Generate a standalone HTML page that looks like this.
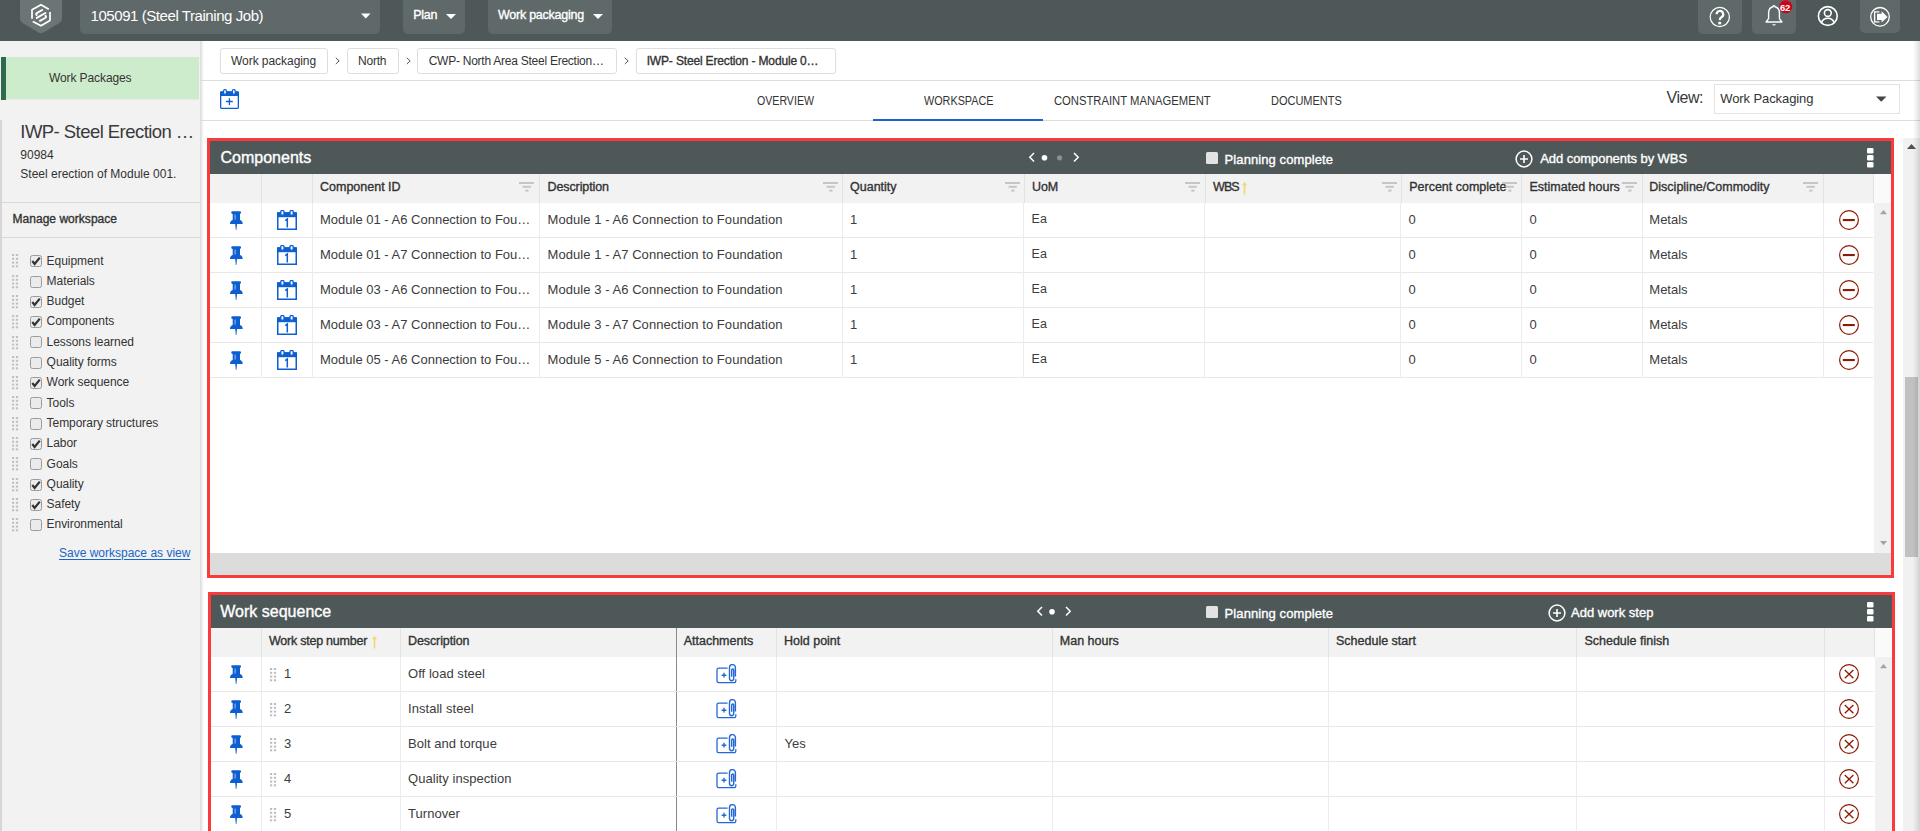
<!DOCTYPE html>
<html><head><meta charset="utf-8"><title>Workspace</title>
<style>
html,body{margin:0;padding:0;width:1920px;height:831px;overflow:hidden;background:#fff;}
body{position:relative;font-family:"Liberation Sans",sans-serif;}
.t{position:absolute;white-space:nowrap;line-height:1;}
.r{position:absolute;display:block;}
u{text-decoration:underline;text-underline-offset:2px;}
</style></head><body>
<div class="r" style="left:0px;top:0px;width:1920px;height:41px;background:#4e5859;"></div>
<svg class="r" style="left:20px;top:0px" width="42" height="35" viewBox="0 0 42 35"><path d="M0,0 H42 V18 Q42,21.5 39,23.2 L23.5,32.6 Q21,34 18.5,32.6 L3,23.2 Q0,21.5 0,18 Z" fill="#6c7576"/><g transform="translate(-2,0)" fill="none" stroke="#fff" stroke-width="1.7" stroke-linecap="butt" stroke-linejoin="round"><path d="M30.8,9.2 L23,4.8 L14,9.8 V18.8"/><path d="M14.8,21.4 L23,25.8 L32,20.6 V12"/></g><g transform="translate(-2,0)" fill="none" stroke="#fff" stroke-width="2" stroke-linecap="round"><path d="M24.2,10 L19.2,12.8 Q17.6,13.8 18.6,15"/><path d="M18.8,17.9 L27.4,13"/><path d="M27.6,15.8 Q28.6,17 27,18 L22,20.8"/></g></svg>
<div class="r" style="left:80px;top:0px;width:300px;height:34px;background:#5f6969;border-radius:0 0 5px 5px;"></div>
<div class="t" style="left:90.5px;top:8.30px;font-size:15px;color:#fff;letter-spacing:-0.43px;">105091 (Steel Training Job)</div>
<svg class="r" style="left:361px;top:13px" width="10" height="6" viewBox="0 0 10 6"><path d="M0,0.5 H9.5 L4.75,5.5 Z" fill="#fff"/></svg>
<div class="r" style="left:403px;top:0px;width:62px;height:34px;background:#5f6969;border-radius:0 0 5px 5px;"></div>
<div class="t" style="left:413.3px;top:9.42px;font-size:12.5px;-webkit-text-stroke:0.35px #fff;color:#fff;letter-spacing:-0.3px;">Plan</div>
<svg class="r" style="left:446px;top:14px" width="10" height="5" viewBox="0 0 10 5"><path d="M0,0 H10 L5,5 Z" fill="#fff"/></svg>
<div class="r" style="left:488px;top:0px;width:124px;height:34px;background:#5f6969;border-radius:0 0 5px 5px;"></div>
<div class="t" style="left:498px;top:9.42px;font-size:12.5px;-webkit-text-stroke:0.35px #fff;color:#fff;letter-spacing:-0.25px;">Work packaging</div>
<svg class="r" style="left:593px;top:14px" width="10" height="5" viewBox="0 0 10 5"><path d="M0,0 H10 L5,5 Z" fill="#fff"/></svg>
<div class="r" style="left:1698px;top:0px;width:44px;height:34px;background:#5f6969;border-radius:0 0 5px 5px;"></div>
<svg class="r" style="left:1708px;top:5px" width="24" height="24" viewBox="0 0 24 24"><circle cx="11.8" cy="12" r="9.6" fill="none" stroke="#fff" stroke-width="1.2"/><path d="M8.6,9.3 A3.3,3.3 0 1 1 13.4,12.2 C12.3,12.9 11.8,13.5 11.8,15" fill="none" stroke="#fff" stroke-width="2.2"/><circle cx="11.7" cy="18" r="1.6" fill="#fff"/></svg>
<div class="r" style="left:1752px;top:0px;width:44px;height:34px;background:#5f6969;border-radius:0 0 5px 5px;"></div>
<svg class="r" style="left:1762px;top:3px" width="24" height="24" viewBox="0 0 24 24"><path d="M12,2.6 C12.8,2.6 13,3.2 13,3.7 C16,4.4 17.4,6.8 17.4,10 V15.6 L19.9,19 H4.1 L6.6,15.6 V10 C6.6,6.8 8,4.4 11,3.7 C11,3.2 11.2,2.6 12,2.6 Z" fill="none" stroke="#fff" stroke-width="1.4" stroke-linejoin="round"/><path d="M10.3,21.2 H13.7 A1.7,1.4 0 0 1 10.3,21.2 Z" fill="#fff"/></svg>
<svg class="r" style="left:1779px;top:0px" width="14" height="14" viewBox="0 0 14 14"><circle cx="6.8" cy="6.8" r="6.5" fill="#d0021b"/></svg>
<div class="t" style="left:1780px;top:2.76px;font-size:9.5px;font-weight:700;color:#fff;letter-spacing:-0.4px;">62</div>
<svg class="r" style="left:1816px;top:4px" width="24" height="24" viewBox="0 0 24 24"><circle cx="11.8" cy="12" r="9.4" fill="none" stroke="#fff" stroke-width="1.6"/><circle cx="11.8" cy="9" r="3.4" fill="none" stroke="#fff" stroke-width="1.6"/><path d="M5.4,18.6 C6.6,15.4 9,14.2 11.8,14.2 C14.6,14.2 17,15.4 18.2,18.6" fill="none" stroke="#fff" stroke-width="1.6"/></svg>
<div class="r" style="left:1860px;top:0px;width:40px;height:33px;background:#5f6969;border-radius:0 0 5px 5px;"></div>
<svg class="r" style="left:1868px;top:5px" width="24" height="24" viewBox="0 0 24 24"><circle cx="12" cy="11.8" r="9.3" fill="none" stroke="#fff" stroke-width="1.3"/><path d="M11.4,6.9 H6.6 V16.9 H11.4" fill="none" stroke="#fff" stroke-width="1.4"/><path d="M9,8.8 H13.6 V6.3 L19.6,11.9 L13.6,17.5 V15 H9 Z" fill="#fff"/></svg>
<div class="r" style="left:0px;top:41px;width:200px;height:790px;background:#f2f2f2;"></div>
<div class="r" style="left:200px;top:41px;width:4px;height:790px;background:linear-gradient(to right,#dcdcdc,#eeeeee 40%,#ffffff);"></div>
<div class="r" style="left:1px;top:57px;width:198px;height:42px;background:#cdeccb;"></div>
<div class="r" style="left:1px;top:57px;width:5px;height:43px;background:#2e6b4c;"></div>
<div class="r" style="left:6px;top:99px;width:193px;height:1px;background:#e8e8e8;"></div>
<div class="t" style="left:49px;top:71.64px;font-size:12px;color:#333333;letter-spacing:-0.1px;">Work Packages</div>
<div class="r" style="left:0px;top:120px;width:2px;height:711px;background:#d6d6d6;"></div>
<div class="t" style="left:20.3px;top:122.54px;font-size:18.5px;color:#3a3a3a;letter-spacing:-0.55px;">IWP- Steel Erection …</div>
<div class="t" style="left:20.3px;top:148.64px;font-size:12px;color:#333333;">90984</div>
<div class="t" style="left:20.3px;top:167.84px;font-size:12px;color:#333333;">Steel erection of Module 001.</div>
<div class="r" style="left:2px;top:202px;width:198px;height:1px;background:#d8d8d8;"></div>
<div class="t" style="left:12.5px;top:212.84px;font-size:12px;-webkit-text-stroke:0.35px #333333;color:#333333;letter-spacing:0.03px;">Manage workspace</div>
<div class="r" style="left:2px;top:237px;width:198px;height:1px;background:#d8d8d8;"></div>
<svg class="r" style="left:12px;top:254.3px" width="7" height="14" viewBox="0 0 7 14"><rect x="0" y="0" width="2.2" height="2" fill="#c0c0c0"/><rect x="0" y="3.8" width="2.2" height="2" fill="#c0c0c0"/><rect x="0" y="7.6" width="2.2" height="2" fill="#c0c0c0"/><rect x="0" y="11.3" width="2.2" height="2" fill="#c0c0c0"/><rect x="3.9" y="0" width="2.2" height="2" fill="#c0c0c0"/><rect x="3.9" y="3.8" width="2.2" height="2" fill="#c0c0c0"/><rect x="3.9" y="7.6" width="2.2" height="2" fill="#c0c0c0"/><rect x="3.9" y="11.3" width="2.2" height="2" fill="#c0c0c0"/></svg>
<svg class="r" style="left:30px;top:255.2px" width="12" height="12" viewBox="0 0 12 12"><rect x="0.5" y="0.5" width="11" height="11" rx="2" fill="#ebebeb" stroke="#9a9a9a" stroke-width="1"/><path d="M2.3,6 L4.6,8.9 L9.8,2.6" fill="none" stroke="#333" stroke-width="2.2"/></svg>
<div class="t" style="left:46.6px;top:254.54px;font-size:12px;color:#333333;letter-spacing:-0.05px;">Equipment</div>
<svg class="r" style="left:12px;top:274.6px" width="7" height="14" viewBox="0 0 7 14"><rect x="0" y="0" width="2.2" height="2" fill="#c0c0c0"/><rect x="0" y="3.8" width="2.2" height="2" fill="#c0c0c0"/><rect x="0" y="7.6" width="2.2" height="2" fill="#c0c0c0"/><rect x="0" y="11.3" width="2.2" height="2" fill="#c0c0c0"/><rect x="3.9" y="0" width="2.2" height="2" fill="#c0c0c0"/><rect x="3.9" y="3.8" width="2.2" height="2" fill="#c0c0c0"/><rect x="3.9" y="7.6" width="2.2" height="2" fill="#c0c0c0"/><rect x="3.9" y="11.3" width="2.2" height="2" fill="#c0c0c0"/></svg>
<svg class="r" style="left:30px;top:275.5px" width="12" height="12" viewBox="0 0 12 12"><rect x="0.5" y="0.5" width="11" height="11" rx="2" fill="#ebebeb" stroke="#9a9a9a" stroke-width="1"/></svg>
<div class="t" style="left:46.6px;top:274.84px;font-size:12px;color:#333333;letter-spacing:-0.05px;">Materials</div>
<svg class="r" style="left:12px;top:294.9px" width="7" height="14" viewBox="0 0 7 14"><rect x="0" y="0" width="2.2" height="2" fill="#c0c0c0"/><rect x="0" y="3.8" width="2.2" height="2" fill="#c0c0c0"/><rect x="0" y="7.6" width="2.2" height="2" fill="#c0c0c0"/><rect x="0" y="11.3" width="2.2" height="2" fill="#c0c0c0"/><rect x="3.9" y="0" width="2.2" height="2" fill="#c0c0c0"/><rect x="3.9" y="3.8" width="2.2" height="2" fill="#c0c0c0"/><rect x="3.9" y="7.6" width="2.2" height="2" fill="#c0c0c0"/><rect x="3.9" y="11.3" width="2.2" height="2" fill="#c0c0c0"/></svg>
<svg class="r" style="left:30px;top:295.8px" width="12" height="12" viewBox="0 0 12 12"><rect x="0.5" y="0.5" width="11" height="11" rx="2" fill="#ebebeb" stroke="#9a9a9a" stroke-width="1"/><path d="M2.3,6 L4.6,8.9 L9.8,2.6" fill="none" stroke="#333" stroke-width="2.2"/></svg>
<div class="t" style="left:46.6px;top:295.14px;font-size:12px;color:#333333;letter-spacing:-0.05px;">Budget</div>
<svg class="r" style="left:12px;top:315.2px" width="7" height="14" viewBox="0 0 7 14"><rect x="0" y="0" width="2.2" height="2" fill="#c0c0c0"/><rect x="0" y="3.8" width="2.2" height="2" fill="#c0c0c0"/><rect x="0" y="7.6" width="2.2" height="2" fill="#c0c0c0"/><rect x="0" y="11.3" width="2.2" height="2" fill="#c0c0c0"/><rect x="3.9" y="0" width="2.2" height="2" fill="#c0c0c0"/><rect x="3.9" y="3.8" width="2.2" height="2" fill="#c0c0c0"/><rect x="3.9" y="7.6" width="2.2" height="2" fill="#c0c0c0"/><rect x="3.9" y="11.3" width="2.2" height="2" fill="#c0c0c0"/></svg>
<svg class="r" style="left:30px;top:316.1px" width="12" height="12" viewBox="0 0 12 12"><rect x="0.5" y="0.5" width="11" height="11" rx="2" fill="#ebebeb" stroke="#9a9a9a" stroke-width="1"/><path d="M2.3,6 L4.6,8.9 L9.8,2.6" fill="none" stroke="#333" stroke-width="2.2"/></svg>
<div class="t" style="left:46.6px;top:315.44px;font-size:12px;color:#333333;letter-spacing:-0.05px;">Components</div>
<svg class="r" style="left:12px;top:335.5px" width="7" height="14" viewBox="0 0 7 14"><rect x="0" y="0" width="2.2" height="2" fill="#c0c0c0"/><rect x="0" y="3.8" width="2.2" height="2" fill="#c0c0c0"/><rect x="0" y="7.6" width="2.2" height="2" fill="#c0c0c0"/><rect x="0" y="11.3" width="2.2" height="2" fill="#c0c0c0"/><rect x="3.9" y="0" width="2.2" height="2" fill="#c0c0c0"/><rect x="3.9" y="3.8" width="2.2" height="2" fill="#c0c0c0"/><rect x="3.9" y="7.6" width="2.2" height="2" fill="#c0c0c0"/><rect x="3.9" y="11.3" width="2.2" height="2" fill="#c0c0c0"/></svg>
<svg class="r" style="left:30px;top:336.4px" width="12" height="12" viewBox="0 0 12 12"><rect x="0.5" y="0.5" width="11" height="11" rx="2" fill="#ebebeb" stroke="#9a9a9a" stroke-width="1"/></svg>
<div class="t" style="left:46.6px;top:335.74px;font-size:12px;color:#333333;letter-spacing:-0.05px;">Lessons learned</div>
<svg class="r" style="left:12px;top:355.8px" width="7" height="14" viewBox="0 0 7 14"><rect x="0" y="0" width="2.2" height="2" fill="#c0c0c0"/><rect x="0" y="3.8" width="2.2" height="2" fill="#c0c0c0"/><rect x="0" y="7.6" width="2.2" height="2" fill="#c0c0c0"/><rect x="0" y="11.3" width="2.2" height="2" fill="#c0c0c0"/><rect x="3.9" y="0" width="2.2" height="2" fill="#c0c0c0"/><rect x="3.9" y="3.8" width="2.2" height="2" fill="#c0c0c0"/><rect x="3.9" y="7.6" width="2.2" height="2" fill="#c0c0c0"/><rect x="3.9" y="11.3" width="2.2" height="2" fill="#c0c0c0"/></svg>
<svg class="r" style="left:30px;top:356.7px" width="12" height="12" viewBox="0 0 12 12"><rect x="0.5" y="0.5" width="11" height="11" rx="2" fill="#ebebeb" stroke="#9a9a9a" stroke-width="1"/></svg>
<div class="t" style="left:46.6px;top:356.04px;font-size:12px;color:#333333;letter-spacing:-0.05px;">Quality forms</div>
<svg class="r" style="left:12px;top:376.1px" width="7" height="14" viewBox="0 0 7 14"><rect x="0" y="0" width="2.2" height="2" fill="#c0c0c0"/><rect x="0" y="3.8" width="2.2" height="2" fill="#c0c0c0"/><rect x="0" y="7.6" width="2.2" height="2" fill="#c0c0c0"/><rect x="0" y="11.3" width="2.2" height="2" fill="#c0c0c0"/><rect x="3.9" y="0" width="2.2" height="2" fill="#c0c0c0"/><rect x="3.9" y="3.8" width="2.2" height="2" fill="#c0c0c0"/><rect x="3.9" y="7.6" width="2.2" height="2" fill="#c0c0c0"/><rect x="3.9" y="11.3" width="2.2" height="2" fill="#c0c0c0"/></svg>
<svg class="r" style="left:30px;top:377.0px" width="12" height="12" viewBox="0 0 12 12"><rect x="0.5" y="0.5" width="11" height="11" rx="2" fill="#ebebeb" stroke="#9a9a9a" stroke-width="1"/><path d="M2.3,6 L4.6,8.9 L9.8,2.6" fill="none" stroke="#333" stroke-width="2.2"/></svg>
<div class="t" style="left:46.6px;top:376.34px;font-size:12px;color:#333333;letter-spacing:-0.05px;">Work sequence</div>
<svg class="r" style="left:12px;top:396.4px" width="7" height="14" viewBox="0 0 7 14"><rect x="0" y="0" width="2.2" height="2" fill="#c0c0c0"/><rect x="0" y="3.8" width="2.2" height="2" fill="#c0c0c0"/><rect x="0" y="7.6" width="2.2" height="2" fill="#c0c0c0"/><rect x="0" y="11.3" width="2.2" height="2" fill="#c0c0c0"/><rect x="3.9" y="0" width="2.2" height="2" fill="#c0c0c0"/><rect x="3.9" y="3.8" width="2.2" height="2" fill="#c0c0c0"/><rect x="3.9" y="7.6" width="2.2" height="2" fill="#c0c0c0"/><rect x="3.9" y="11.3" width="2.2" height="2" fill="#c0c0c0"/></svg>
<svg class="r" style="left:30px;top:397.3px" width="12" height="12" viewBox="0 0 12 12"><rect x="0.5" y="0.5" width="11" height="11" rx="2" fill="#ebebeb" stroke="#9a9a9a" stroke-width="1"/></svg>
<div class="t" style="left:46.6px;top:396.64px;font-size:12px;color:#333333;letter-spacing:-0.05px;">Tools</div>
<svg class="r" style="left:12px;top:416.7px" width="7" height="14" viewBox="0 0 7 14"><rect x="0" y="0" width="2.2" height="2" fill="#c0c0c0"/><rect x="0" y="3.8" width="2.2" height="2" fill="#c0c0c0"/><rect x="0" y="7.6" width="2.2" height="2" fill="#c0c0c0"/><rect x="0" y="11.3" width="2.2" height="2" fill="#c0c0c0"/><rect x="3.9" y="0" width="2.2" height="2" fill="#c0c0c0"/><rect x="3.9" y="3.8" width="2.2" height="2" fill="#c0c0c0"/><rect x="3.9" y="7.6" width="2.2" height="2" fill="#c0c0c0"/><rect x="3.9" y="11.3" width="2.2" height="2" fill="#c0c0c0"/></svg>
<svg class="r" style="left:30px;top:417.6px" width="12" height="12" viewBox="0 0 12 12"><rect x="0.5" y="0.5" width="11" height="11" rx="2" fill="#ebebeb" stroke="#9a9a9a" stroke-width="1"/></svg>
<div class="t" style="left:46.6px;top:416.94px;font-size:12px;color:#333333;letter-spacing:-0.05px;">Temporary structures</div>
<svg class="r" style="left:12px;top:437.0px" width="7" height="14" viewBox="0 0 7 14"><rect x="0" y="0" width="2.2" height="2" fill="#c0c0c0"/><rect x="0" y="3.8" width="2.2" height="2" fill="#c0c0c0"/><rect x="0" y="7.6" width="2.2" height="2" fill="#c0c0c0"/><rect x="0" y="11.3" width="2.2" height="2" fill="#c0c0c0"/><rect x="3.9" y="0" width="2.2" height="2" fill="#c0c0c0"/><rect x="3.9" y="3.8" width="2.2" height="2" fill="#c0c0c0"/><rect x="3.9" y="7.6" width="2.2" height="2" fill="#c0c0c0"/><rect x="3.9" y="11.3" width="2.2" height="2" fill="#c0c0c0"/></svg>
<svg class="r" style="left:30px;top:437.9px" width="12" height="12" viewBox="0 0 12 12"><rect x="0.5" y="0.5" width="11" height="11" rx="2" fill="#ebebeb" stroke="#9a9a9a" stroke-width="1"/><path d="M2.3,6 L4.6,8.9 L9.8,2.6" fill="none" stroke="#333" stroke-width="2.2"/></svg>
<div class="t" style="left:46.6px;top:437.24px;font-size:12px;color:#333333;letter-spacing:-0.05px;">Labor</div>
<svg class="r" style="left:12px;top:457.3px" width="7" height="14" viewBox="0 0 7 14"><rect x="0" y="0" width="2.2" height="2" fill="#c0c0c0"/><rect x="0" y="3.8" width="2.2" height="2" fill="#c0c0c0"/><rect x="0" y="7.6" width="2.2" height="2" fill="#c0c0c0"/><rect x="0" y="11.3" width="2.2" height="2" fill="#c0c0c0"/><rect x="3.9" y="0" width="2.2" height="2" fill="#c0c0c0"/><rect x="3.9" y="3.8" width="2.2" height="2" fill="#c0c0c0"/><rect x="3.9" y="7.6" width="2.2" height="2" fill="#c0c0c0"/><rect x="3.9" y="11.3" width="2.2" height="2" fill="#c0c0c0"/></svg>
<svg class="r" style="left:30px;top:458.2px" width="12" height="12" viewBox="0 0 12 12"><rect x="0.5" y="0.5" width="11" height="11" rx="2" fill="#ebebeb" stroke="#9a9a9a" stroke-width="1"/></svg>
<div class="t" style="left:46.6px;top:457.54px;font-size:12px;color:#333333;letter-spacing:-0.05px;">Goals</div>
<svg class="r" style="left:12px;top:477.6px" width="7" height="14" viewBox="0 0 7 14"><rect x="0" y="0" width="2.2" height="2" fill="#c0c0c0"/><rect x="0" y="3.8" width="2.2" height="2" fill="#c0c0c0"/><rect x="0" y="7.6" width="2.2" height="2" fill="#c0c0c0"/><rect x="0" y="11.3" width="2.2" height="2" fill="#c0c0c0"/><rect x="3.9" y="0" width="2.2" height="2" fill="#c0c0c0"/><rect x="3.9" y="3.8" width="2.2" height="2" fill="#c0c0c0"/><rect x="3.9" y="7.6" width="2.2" height="2" fill="#c0c0c0"/><rect x="3.9" y="11.3" width="2.2" height="2" fill="#c0c0c0"/></svg>
<svg class="r" style="left:30px;top:478.5px" width="12" height="12" viewBox="0 0 12 12"><rect x="0.5" y="0.5" width="11" height="11" rx="2" fill="#ebebeb" stroke="#9a9a9a" stroke-width="1"/><path d="M2.3,6 L4.6,8.9 L9.8,2.6" fill="none" stroke="#333" stroke-width="2.2"/></svg>
<div class="t" style="left:46.6px;top:477.84px;font-size:12px;color:#333333;letter-spacing:-0.05px;">Quality</div>
<svg class="r" style="left:12px;top:497.9px" width="7" height="14" viewBox="0 0 7 14"><rect x="0" y="0" width="2.2" height="2" fill="#c0c0c0"/><rect x="0" y="3.8" width="2.2" height="2" fill="#c0c0c0"/><rect x="0" y="7.6" width="2.2" height="2" fill="#c0c0c0"/><rect x="0" y="11.3" width="2.2" height="2" fill="#c0c0c0"/><rect x="3.9" y="0" width="2.2" height="2" fill="#c0c0c0"/><rect x="3.9" y="3.8" width="2.2" height="2" fill="#c0c0c0"/><rect x="3.9" y="7.6" width="2.2" height="2" fill="#c0c0c0"/><rect x="3.9" y="11.3" width="2.2" height="2" fill="#c0c0c0"/></svg>
<svg class="r" style="left:30px;top:498.8px" width="12" height="12" viewBox="0 0 12 12"><rect x="0.5" y="0.5" width="11" height="11" rx="2" fill="#ebebeb" stroke="#9a9a9a" stroke-width="1"/><path d="M2.3,6 L4.6,8.9 L9.8,2.6" fill="none" stroke="#333" stroke-width="2.2"/></svg>
<div class="t" style="left:46.6px;top:498.14px;font-size:12px;color:#333333;letter-spacing:-0.05px;">Safety</div>
<svg class="r" style="left:12px;top:518.2px" width="7" height="14" viewBox="0 0 7 14"><rect x="0" y="0" width="2.2" height="2" fill="#c0c0c0"/><rect x="0" y="3.8" width="2.2" height="2" fill="#c0c0c0"/><rect x="0" y="7.6" width="2.2" height="2" fill="#c0c0c0"/><rect x="0" y="11.3" width="2.2" height="2" fill="#c0c0c0"/><rect x="3.9" y="0" width="2.2" height="2" fill="#c0c0c0"/><rect x="3.9" y="3.8" width="2.2" height="2" fill="#c0c0c0"/><rect x="3.9" y="7.6" width="2.2" height="2" fill="#c0c0c0"/><rect x="3.9" y="11.3" width="2.2" height="2" fill="#c0c0c0"/></svg>
<svg class="r" style="left:30px;top:519.1px" width="12" height="12" viewBox="0 0 12 12"><rect x="0.5" y="0.5" width="11" height="11" rx="2" fill="#ebebeb" stroke="#9a9a9a" stroke-width="1"/></svg>
<div class="t" style="left:46.6px;top:518.44px;font-size:12px;color:#333333;letter-spacing:-0.05px;">Environmental</div>
<div class="t" style="left:59px;top:546.84px;font-size:12px;color:#1a66c6;"><u>Save workspace as view</u></div>
<div class="r" style="left:204px;top:41px;width:1716px;height:790px;background:#ffffff;"></div>
<div class="r" style="left:200px;top:41px;width:4px;height:790px;background:linear-gradient(to right,#d9d9d9,#ececec 45%,#ffffff);"></div>
<div class="r" style="left:220px;top:48px;width:108px;height:26px;background:#fff;box-sizing:border-box;border:1px solid #dedede;border-radius:3px;"></div>
<div class="t" style="left:231px;top:54.84px;font-size:12px;color:#333333;letter-spacing:-0.05px;">Work packaging</div>
<div class="r" style="left:347px;top:48px;width:52px;height:26px;background:#fff;box-sizing:border-box;border:1px solid #dedede;border-radius:3px;"></div>
<div class="t" style="left:358px;top:54.84px;font-size:12px;color:#333333;letter-spacing:-0.2px;">North</div>
<div class="r" style="left:417px;top:48px;width:200px;height:26px;background:#fff;box-sizing:border-box;border:1px solid #dedede;border-radius:3px;"></div>
<div class="t" style="left:428.7px;top:54.84px;font-size:12px;color:#333333;letter-spacing:-0.25px;">CWP- North Area Steel Erection…</div>
<div class="r" style="left:636px;top:48px;width:200px;height:26px;background:#fff;box-sizing:border-box;border:1px solid #dedede;border-radius:3px;"></div>
<div class="t" style="left:646.7px;top:54.84px;font-size:12px;-webkit-text-stroke:0.35px #333333;color:#333333;letter-spacing:-0.16px;">IWP- Steel Erection - Module 0…</div>
<svg class="r" style="left:335px;top:57px" width="6" height="8" viewBox="0 0 6 8"><path d="M0.8,0.8 L4.2,3.9 L0.8,7" fill="none" stroke="#555" stroke-width="1"/></svg>
<svg class="r" style="left:405.8px;top:57px" width="6" height="8" viewBox="0 0 6 8"><path d="M0.8,0.8 L4.2,3.9 L0.8,7" fill="none" stroke="#555" stroke-width="1"/></svg>
<svg class="r" style="left:624px;top:57px" width="6" height="8" viewBox="0 0 6 8"><path d="M0.8,0.8 L4.2,3.9 L0.8,7" fill="none" stroke="#555" stroke-width="1"/></svg>
<div class="r" style="left:201px;top:80px;width:1719px;height:1px;background:#dddddd;"></div>
<svg class="r" style="left:220px;top:89px" width="19" height="20" viewBox="0 0 19 20"><rect x="0.65" y="3" width="17.7" height="16.35" fill="none" stroke="#0d5fd1" stroke-width="1.3" rx="1.2"/><rect x="0" y="2.6" width="19" height="4.4" fill="#0d5fd1"/><rect x="3.6" y="0.6" width="2.8" height="4.6" rx="1.2" fill="#fff" stroke="#0d5fd1" stroke-width="1.2"/><rect x="12.4" y="0.6" width="2.8" height="4.6" rx="1.2" fill="#fff" stroke="#0d5fd1" stroke-width="1.2"/><path d="M9.4,9.2 V15.9 M6,12.5 H12.8" stroke="#0d5fd1" stroke-width="1.3"/></svg>
<div class="t" style="left:756.7px;top:94.84px;font-size:12px;color:#333333;transform:scaleX(0.8837209302325582);transform-origin:0 0;">OVERVIEW</div>
<div class="t" style="left:924.2px;top:94.84px;font-size:12px;color:#333333;transform:scaleX(0.9014267185473411);transform-origin:0 0;">WORKSPACE</div>
<div class="t" style="left:1054.2px;top:94.84px;font-size:12px;color:#333333;transform:scaleX(0.9371633752244165);transform-origin:0 0;">CONSTRAINT MANAGEMENT</div>
<div class="t" style="left:1270.5px;top:94.84px;font-size:12px;color:#333333;transform:scaleX(0.9159120310478654);transform-origin:0 0;">DOCUMENTS</div>
<div class="r" style="left:201px;top:120px;width:1719px;height:1px;background:#dddddd;"></div>
<div class="r" style="left:873px;top:119px;width:170px;height:2px;background:#1565d2;"></div>
<div class="t" style="left:1666.6px;top:90.46px;font-size:16px;color:#3a3a3a;letter-spacing:-0.5px;">View:</div>
<div class="r" style="left:1714px;top:84px;width:186px;height:30px;background:#fff;box-sizing:border-box;border:1px solid #e3e3e3;"></div>
<div class="t" style="left:1720.3px;top:92.30px;font-size:13px;color:#333333;letter-spacing:-0.1px;">Work Packaging</div>
<svg class="r" style="left:1876px;top:96px" width="11" height="6" viewBox="0 0 11 6"><path d="M0,0.5 H10.5 L5.25,5.8 Z" fill="#444"/></svg>
<div class="r" style="left:1903px;top:138px;width:17px;height:693px;background:#f1f1f1;"></div>
<div class="r" style="left:1905px;top:377px;width:13px;height:180px;background:#c1c1c1;"></div>
<svg class="r" style="left:1907px;top:144px" width="9" height="6" viewBox="0 0 9 6"><path d="M0,5 H9 L4.5,0 Z" fill="#505050"/></svg>
<div class="r" style="left:1913px;top:41px;width:7px;height:790px;background:linear-gradient(to right,rgba(0,0,0,0),rgba(0,0,0,0.13));"></div>
<div class="r" style="left:207px;top:138px;width:1687px;height:440px;background:#fb3b3b;"></div>
<div class="r" style="left:210px;top:141px;width:1681px;height:434px;background:#fff;"></div>
<div class="r" style="left:210px;top:141px;width:1681px;height:33px;background:#4e5859;"></div>
<div class="t" style="left:220.5px;top:149.96px;font-size:16px;-webkit-text-stroke:0.35px #fff;color:#fff;">Components</div>
<svg class="r" style="left:1028px;top:152px" width="54" height="11" viewBox="0 0 54 11"><path d="M6,1 L1.8,5.3 L6,9.6" fill="none" stroke="#fff" stroke-width="1.5"/><circle cx="16.5" cy="5.8" r="2.8" fill="#fff"/><circle cx="31.6" cy="5.8" r="2.6" fill="#8a9090"/><path d="M46,1 L50.2,5.3 L46,9.6" fill="none" stroke="#fff" stroke-width="1.5"/></svg>
<svg class="r" style="left:1206px;top:152px" width="12" height="12" viewBox="0 0 12 12"><rect x="0" y="0" width="12" height="12" rx="1.5" fill="#e2e2e2"/></svg>
<div class="t" style="left:1224.6px;top:153.20px;font-size:13px;-webkit-text-stroke:0.35px #fff;color:#fff;letter-spacing:0.09px;">Planning complete</div>
<svg class="r" style="left:1515px;top:150px" width="18" height="18" viewBox="0 0 18 18"><circle cx="9" cy="9" r="7.9" fill="none" stroke="#fff" stroke-width="1.5"/><path d="M9,5 V13 M5,9 H13" stroke="#fff" stroke-width="1.6"/></svg>
<div class="t" style="left:1540.2px;top:152.00px;font-size:13px;-webkit-text-stroke:0.35px #fff;color:#fff;letter-spacing:-0.06px;">Add components by WBS</div>
<svg class="r" style="left:1867px;top:148px" width="7" height="20" viewBox="0 0 7 20"><rect x="0" y="0" width="6.5" height="5.5" rx="1.2" fill="#fff"/><rect x="0" y="7" width="6.5" height="5.5" rx="1.2" fill="#fff"/><rect x="0" y="14" width="6.5" height="5.5" rx="1.2" fill="#fff"/></svg>
<div class="r" style="left:210px;top:174px;width:1681px;height:29px;background:#f2f2f2;"></div>
<div class="r" style="left:1874px;top:174px;width:17px;height:29px;background:#fafafa;"></div>
<div class="r" style="left:261px;top:174px;width:1px;height:29px;background:#e2e2e2;"></div>
<div class="r" style="left:312px;top:174px;width:1px;height:29px;background:#e2e2e2;"></div>
<div class="r" style="left:539px;top:174px;width:1px;height:29px;background:#e2e2e2;"></div>
<div class="r" style="left:842px;top:174px;width:1px;height:29px;background:#e2e2e2;"></div>
<div class="r" style="left:1024px;top:174px;width:1px;height:29px;background:#e2e2e2;"></div>
<div class="r" style="left:1205px;top:174px;width:1px;height:29px;background:#e2e2e2;"></div>
<div class="r" style="left:1401px;top:174px;width:1px;height:29px;background:#e2e2e2;"></div>
<div class="r" style="left:1521px;top:174px;width:1px;height:29px;background:#e2e2e2;"></div>
<div class="r" style="left:1642px;top:174px;width:1px;height:29px;background:#e2e2e2;"></div>
<div class="r" style="left:1823px;top:174px;width:1px;height:29px;background:#e2e2e2;"></div>
<div class="r" style="left:1873px;top:174px;width:1px;height:29px;background:#e2e2e2;"></div>
<div class="t" style="left:320px;top:180.62px;font-size:12.5px;-webkit-text-stroke:0.35px #333333;color:#333333;">Component ID</div>
<div class="t" style="left:547.5px;top:180.62px;font-size:12.5px;-webkit-text-stroke:0.35px #333333;color:#333333;letter-spacing:-0.1px;">Description</div>
<div class="t" style="left:850px;top:180.62px;font-size:12.5px;-webkit-text-stroke:0.35px #333333;color:#333333;">Quantity</div>
<div class="t" style="left:1031.9px;top:180.62px;font-size:12.5px;-webkit-text-stroke:0.35px #333333;color:#333333;">UoM</div>
<div class="t" style="left:1213px;top:180.62px;font-size:12.5px;-webkit-text-stroke:0.35px #333333;color:#333333;letter-spacing:-0.9px;">WBS</div>
<div class="t" style="left:1409.2px;top:180.62px;font-size:12.5px;-webkit-text-stroke:0.35px #333333;color:#333333;">Percent complete</div>
<div class="t" style="left:1529.5px;top:180.62px;font-size:12.5px;-webkit-text-stroke:0.35px #333333;color:#333333;">Estimated hours</div>
<div class="t" style="left:1649.3px;top:180.62px;font-size:12.5px;-webkit-text-stroke:0.35px #333333;color:#333333;">Discipline/Commodity</div>
<svg class="r" style="left:519px;top:182px" width="15" height="10" viewBox="0 0 15 10"><rect x="0" y="0" width="15" height="2" fill="#c6c6c6"/><rect x="3.5" y="3.8" width="8.4" height="2" fill="#c6c6c6"/><rect x="6.2" y="7.6" width="3.3" height="2" fill="#c6c6c6"/></svg>
<svg class="r" style="left:823px;top:182px" width="15" height="10" viewBox="0 0 15 10"><rect x="0" y="0" width="15" height="2" fill="#c6c6c6"/><rect x="3.5" y="3.8" width="8.4" height="2" fill="#c6c6c6"/><rect x="6.2" y="7.6" width="3.3" height="2" fill="#c6c6c6"/></svg>
<svg class="r" style="left:1005px;top:182px" width="15" height="10" viewBox="0 0 15 10"><rect x="0" y="0" width="15" height="2" fill="#c6c6c6"/><rect x="3.5" y="3.8" width="8.4" height="2" fill="#c6c6c6"/><rect x="6.2" y="7.6" width="3.3" height="2" fill="#c6c6c6"/></svg>
<svg class="r" style="left:1185px;top:182px" width="15" height="10" viewBox="0 0 15 10"><rect x="0" y="0" width="15" height="2" fill="#c6c6c6"/><rect x="3.5" y="3.8" width="8.4" height="2" fill="#c6c6c6"/><rect x="6.2" y="7.6" width="3.3" height="2" fill="#c6c6c6"/></svg>
<svg class="r" style="left:1382px;top:182px" width="15" height="10" viewBox="0 0 15 10"><rect x="0" y="0" width="15" height="2" fill="#c6c6c6"/><rect x="3.5" y="3.8" width="8.4" height="2" fill="#c6c6c6"/><rect x="6.2" y="7.6" width="3.3" height="2" fill="#c6c6c6"/></svg>
<svg class="r" style="left:1502px;top:182px" width="15" height="10" viewBox="0 0 15 10"><rect x="0" y="0" width="15" height="2" fill="#c6c6c6"/><rect x="3.5" y="3.8" width="8.4" height="2" fill="#c6c6c6"/><rect x="6.2" y="7.6" width="3.3" height="2" fill="#c6c6c6"/></svg>
<svg class="r" style="left:1622px;top:182px" width="15" height="10" viewBox="0 0 15 10"><rect x="0" y="0" width="15" height="2" fill="#c6c6c6"/><rect x="3.5" y="3.8" width="8.4" height="2" fill="#c6c6c6"/><rect x="6.2" y="7.6" width="3.3" height="2" fill="#c6c6c6"/></svg>
<svg class="r" style="left:1803px;top:182px" width="15" height="10" viewBox="0 0 15 10"><rect x="0" y="0" width="15" height="2" fill="#c6c6c6"/><rect x="3.5" y="3.8" width="8.4" height="2" fill="#c6c6c6"/><rect x="6.2" y="7.6" width="3.3" height="2" fill="#c6c6c6"/></svg>
<svg class="r" style="left:1242px;top:182px" width="5" height="13" viewBox="0 0 5 13"><path d="M2.5,0 L5,3.2 H3.3 V12.5 H1.7 V3.2 H0 Z" fill="#f5d56e"/></svg>
<div class="r" style="left:210px;top:237px;width:1663px;height:1px;background:#e8e8e8;"></div>
<div class="r" style="left:261px;top:203px;width:1px;height:35px;background:#ececec;"></div>
<div class="r" style="left:312px;top:203px;width:1px;height:35px;background:#ececec;"></div>
<div class="r" style="left:539px;top:203px;width:1px;height:35px;background:#ececec;"></div>
<div class="r" style="left:842px;top:203px;width:1px;height:35px;background:#ececec;"></div>
<div class="r" style="left:1023px;top:203px;width:1px;height:35px;background:#ececec;"></div>
<div class="r" style="left:1204px;top:203px;width:1px;height:35px;background:#ececec;"></div>
<div class="r" style="left:1400px;top:203px;width:1px;height:35px;background:#ececec;"></div>
<div class="r" style="left:1521px;top:203px;width:1px;height:35px;background:#ececec;"></div>
<div class="r" style="left:1642px;top:203px;width:1px;height:35px;background:#ececec;"></div>
<div class="r" style="left:1823px;top:203px;width:1px;height:35px;background:#ececec;"></div>
<svg class="r" style="left:229.8px;top:211px" width="13" height="19" viewBox="0 0 13 19"><path d="M2.6,0.2 H9.7 A1.4,1.4 0 0 1 9.7,3 V3 H10 V9 C11.8,9.6 12.7,11 12.7,13 H0 C0,11 0.9,9.6 2.7,9 V3 H2.6 A1.4,1.4 0 0 1 2.6,0.2 Z" fill="#0d5fd1"/><rect x="4.6" y="3.6" width="1" height="5" fill="#9ec0ee"/><path d="M5.2,13 H7 L6.4,19 H5.8 Z" fill="#0d5fd1"/></svg>
<svg class="r" style="left:277px;top:210px" width="20" height="20" viewBox="0 0 20 20"><rect x="0.75" y="3" width="18.5" height="16.25" fill="none" stroke="#0d5fd1" stroke-width="1.5"/><rect x="0.75" y="2.3" width="18.5" height="4.9" fill="#0d5fd1"/><rect x="3.8" y="0.6" width="3.2" height="4.6" rx="1" fill="#fff" stroke="#0d5fd1" stroke-width="1.3"/><rect x="13" y="0.6" width="3.2" height="4.6" rx="1" fill="#fff" stroke="#0d5fd1" stroke-width="1.3"/><path d="M8.2,10.6 L10.3,9 V17.5" fill="none" stroke="#0d5fd1" stroke-width="1.5"/></svg>
<div class="t" style="left:320px;top:213.00px;font-size:13px;color:#3c3c3c;">Module 01 - A6 Connection to Fou…</div>
<div class="t" style="left:547.5px;top:213.00px;font-size:13px;color:#3c3c3c;letter-spacing:0.06px;">Module 1 - A6 Connection to Foundation</div>
<div class="t" style="left:850px;top:213.00px;font-size:13px;color:#3c3c3c;">1</div>
<div class="t" style="left:1031.6px;top:212.62px;font-size:12.5px;color:#3c3c3c;">Ea</div>
<div class="t" style="left:1408.5px;top:213.00px;font-size:13px;color:#3c3c3c;">0</div>
<div class="t" style="left:1529.5px;top:213.00px;font-size:13px;color:#3c3c3c;">0</div>
<div class="t" style="left:1649.3px;top:213.00px;font-size:13px;color:#3c3c3c;">Metals</div>
<svg class="r" style="left:1838.5px;top:210px" width="20" height="20" viewBox="0 0 20 20"><circle cx="10" cy="10" r="9.4" fill="none" stroke="#8c1a04" stroke-width="1.2"/><rect x="3.8" y="9" width="12" height="2.1" fill="#8c1a04"/></svg>
<div class="r" style="left:210px;top:272px;width:1663px;height:1px;background:#e8e8e8;"></div>
<div class="r" style="left:261px;top:238px;width:1px;height:35px;background:#ececec;"></div>
<div class="r" style="left:312px;top:238px;width:1px;height:35px;background:#ececec;"></div>
<div class="r" style="left:539px;top:238px;width:1px;height:35px;background:#ececec;"></div>
<div class="r" style="left:842px;top:238px;width:1px;height:35px;background:#ececec;"></div>
<div class="r" style="left:1023px;top:238px;width:1px;height:35px;background:#ececec;"></div>
<div class="r" style="left:1204px;top:238px;width:1px;height:35px;background:#ececec;"></div>
<div class="r" style="left:1400px;top:238px;width:1px;height:35px;background:#ececec;"></div>
<div class="r" style="left:1521px;top:238px;width:1px;height:35px;background:#ececec;"></div>
<div class="r" style="left:1642px;top:238px;width:1px;height:35px;background:#ececec;"></div>
<div class="r" style="left:1823px;top:238px;width:1px;height:35px;background:#ececec;"></div>
<svg class="r" style="left:229.8px;top:246px" width="13" height="19" viewBox="0 0 13 19"><path d="M2.6,0.2 H9.7 A1.4,1.4 0 0 1 9.7,3 V3 H10 V9 C11.8,9.6 12.7,11 12.7,13 H0 C0,11 0.9,9.6 2.7,9 V3 H2.6 A1.4,1.4 0 0 1 2.6,0.2 Z" fill="#0d5fd1"/><rect x="4.6" y="3.6" width="1" height="5" fill="#9ec0ee"/><path d="M5.2,13 H7 L6.4,19 H5.8 Z" fill="#0d5fd1"/></svg>
<svg class="r" style="left:277px;top:245px" width="20" height="20" viewBox="0 0 20 20"><rect x="0.75" y="3" width="18.5" height="16.25" fill="none" stroke="#0d5fd1" stroke-width="1.5"/><rect x="0.75" y="2.3" width="18.5" height="4.9" fill="#0d5fd1"/><rect x="3.8" y="0.6" width="3.2" height="4.6" rx="1" fill="#fff" stroke="#0d5fd1" stroke-width="1.3"/><rect x="13" y="0.6" width="3.2" height="4.6" rx="1" fill="#fff" stroke="#0d5fd1" stroke-width="1.3"/><path d="M8.2,10.6 L10.3,9 V17.5" fill="none" stroke="#0d5fd1" stroke-width="1.5"/></svg>
<div class="t" style="left:320px;top:248.00px;font-size:13px;color:#3c3c3c;">Module 01 - A7 Connection to Fou…</div>
<div class="t" style="left:547.5px;top:248.00px;font-size:13px;color:#3c3c3c;letter-spacing:0.06px;">Module 1 - A7 Connection to Foundation</div>
<div class="t" style="left:850px;top:248.00px;font-size:13px;color:#3c3c3c;">1</div>
<div class="t" style="left:1031.6px;top:247.62px;font-size:12.5px;color:#3c3c3c;">Ea</div>
<div class="t" style="left:1408.5px;top:248.00px;font-size:13px;color:#3c3c3c;">0</div>
<div class="t" style="left:1529.5px;top:248.00px;font-size:13px;color:#3c3c3c;">0</div>
<div class="t" style="left:1649.3px;top:248.00px;font-size:13px;color:#3c3c3c;">Metals</div>
<svg class="r" style="left:1838.5px;top:245px" width="20" height="20" viewBox="0 0 20 20"><circle cx="10" cy="10" r="9.4" fill="none" stroke="#8c1a04" stroke-width="1.2"/><rect x="3.8" y="9" width="12" height="2.1" fill="#8c1a04"/></svg>
<div class="r" style="left:210px;top:307px;width:1663px;height:1px;background:#e8e8e8;"></div>
<div class="r" style="left:261px;top:273px;width:1px;height:35px;background:#ececec;"></div>
<div class="r" style="left:312px;top:273px;width:1px;height:35px;background:#ececec;"></div>
<div class="r" style="left:539px;top:273px;width:1px;height:35px;background:#ececec;"></div>
<div class="r" style="left:842px;top:273px;width:1px;height:35px;background:#ececec;"></div>
<div class="r" style="left:1023px;top:273px;width:1px;height:35px;background:#ececec;"></div>
<div class="r" style="left:1204px;top:273px;width:1px;height:35px;background:#ececec;"></div>
<div class="r" style="left:1400px;top:273px;width:1px;height:35px;background:#ececec;"></div>
<div class="r" style="left:1521px;top:273px;width:1px;height:35px;background:#ececec;"></div>
<div class="r" style="left:1642px;top:273px;width:1px;height:35px;background:#ececec;"></div>
<div class="r" style="left:1823px;top:273px;width:1px;height:35px;background:#ececec;"></div>
<svg class="r" style="left:229.8px;top:281px" width="13" height="19" viewBox="0 0 13 19"><path d="M2.6,0.2 H9.7 A1.4,1.4 0 0 1 9.7,3 V3 H10 V9 C11.8,9.6 12.7,11 12.7,13 H0 C0,11 0.9,9.6 2.7,9 V3 H2.6 A1.4,1.4 0 0 1 2.6,0.2 Z" fill="#0d5fd1"/><rect x="4.6" y="3.6" width="1" height="5" fill="#9ec0ee"/><path d="M5.2,13 H7 L6.4,19 H5.8 Z" fill="#0d5fd1"/></svg>
<svg class="r" style="left:277px;top:280px" width="20" height="20" viewBox="0 0 20 20"><rect x="0.75" y="3" width="18.5" height="16.25" fill="none" stroke="#0d5fd1" stroke-width="1.5"/><rect x="0.75" y="2.3" width="18.5" height="4.9" fill="#0d5fd1"/><rect x="3.8" y="0.6" width="3.2" height="4.6" rx="1" fill="#fff" stroke="#0d5fd1" stroke-width="1.3"/><rect x="13" y="0.6" width="3.2" height="4.6" rx="1" fill="#fff" stroke="#0d5fd1" stroke-width="1.3"/><path d="M8.2,10.6 L10.3,9 V17.5" fill="none" stroke="#0d5fd1" stroke-width="1.5"/></svg>
<div class="t" style="left:320px;top:283.00px;font-size:13px;color:#3c3c3c;">Module 03 - A6 Connection to Fou…</div>
<div class="t" style="left:547.5px;top:283.00px;font-size:13px;color:#3c3c3c;letter-spacing:0.06px;">Module 3 - A6 Connection to Foundation</div>
<div class="t" style="left:850px;top:283.00px;font-size:13px;color:#3c3c3c;">1</div>
<div class="t" style="left:1031.6px;top:282.62px;font-size:12.5px;color:#3c3c3c;">Ea</div>
<div class="t" style="left:1408.5px;top:283.00px;font-size:13px;color:#3c3c3c;">0</div>
<div class="t" style="left:1529.5px;top:283.00px;font-size:13px;color:#3c3c3c;">0</div>
<div class="t" style="left:1649.3px;top:283.00px;font-size:13px;color:#3c3c3c;">Metals</div>
<svg class="r" style="left:1838.5px;top:280px" width="20" height="20" viewBox="0 0 20 20"><circle cx="10" cy="10" r="9.4" fill="none" stroke="#8c1a04" stroke-width="1.2"/><rect x="3.8" y="9" width="12" height="2.1" fill="#8c1a04"/></svg>
<div class="r" style="left:210px;top:342px;width:1663px;height:1px;background:#e8e8e8;"></div>
<div class="r" style="left:261px;top:308px;width:1px;height:35px;background:#ececec;"></div>
<div class="r" style="left:312px;top:308px;width:1px;height:35px;background:#ececec;"></div>
<div class="r" style="left:539px;top:308px;width:1px;height:35px;background:#ececec;"></div>
<div class="r" style="left:842px;top:308px;width:1px;height:35px;background:#ececec;"></div>
<div class="r" style="left:1023px;top:308px;width:1px;height:35px;background:#ececec;"></div>
<div class="r" style="left:1204px;top:308px;width:1px;height:35px;background:#ececec;"></div>
<div class="r" style="left:1400px;top:308px;width:1px;height:35px;background:#ececec;"></div>
<div class="r" style="left:1521px;top:308px;width:1px;height:35px;background:#ececec;"></div>
<div class="r" style="left:1642px;top:308px;width:1px;height:35px;background:#ececec;"></div>
<div class="r" style="left:1823px;top:308px;width:1px;height:35px;background:#ececec;"></div>
<svg class="r" style="left:229.8px;top:316px" width="13" height="19" viewBox="0 0 13 19"><path d="M2.6,0.2 H9.7 A1.4,1.4 0 0 1 9.7,3 V3 H10 V9 C11.8,9.6 12.7,11 12.7,13 H0 C0,11 0.9,9.6 2.7,9 V3 H2.6 A1.4,1.4 0 0 1 2.6,0.2 Z" fill="#0d5fd1"/><rect x="4.6" y="3.6" width="1" height="5" fill="#9ec0ee"/><path d="M5.2,13 H7 L6.4,19 H5.8 Z" fill="#0d5fd1"/></svg>
<svg class="r" style="left:277px;top:315px" width="20" height="20" viewBox="0 0 20 20"><rect x="0.75" y="3" width="18.5" height="16.25" fill="none" stroke="#0d5fd1" stroke-width="1.5"/><rect x="0.75" y="2.3" width="18.5" height="4.9" fill="#0d5fd1"/><rect x="3.8" y="0.6" width="3.2" height="4.6" rx="1" fill="#fff" stroke="#0d5fd1" stroke-width="1.3"/><rect x="13" y="0.6" width="3.2" height="4.6" rx="1" fill="#fff" stroke="#0d5fd1" stroke-width="1.3"/><path d="M8.2,10.6 L10.3,9 V17.5" fill="none" stroke="#0d5fd1" stroke-width="1.5"/></svg>
<div class="t" style="left:320px;top:318.00px;font-size:13px;color:#3c3c3c;">Module 03 - A7 Connection to Fou…</div>
<div class="t" style="left:547.5px;top:318.00px;font-size:13px;color:#3c3c3c;letter-spacing:0.06px;">Module 3 - A7 Connection to Foundation</div>
<div class="t" style="left:850px;top:318.00px;font-size:13px;color:#3c3c3c;">1</div>
<div class="t" style="left:1031.6px;top:317.62px;font-size:12.5px;color:#3c3c3c;">Ea</div>
<div class="t" style="left:1408.5px;top:318.00px;font-size:13px;color:#3c3c3c;">0</div>
<div class="t" style="left:1529.5px;top:318.00px;font-size:13px;color:#3c3c3c;">0</div>
<div class="t" style="left:1649.3px;top:318.00px;font-size:13px;color:#3c3c3c;">Metals</div>
<svg class="r" style="left:1838.5px;top:315px" width="20" height="20" viewBox="0 0 20 20"><circle cx="10" cy="10" r="9.4" fill="none" stroke="#8c1a04" stroke-width="1.2"/><rect x="3.8" y="9" width="12" height="2.1" fill="#8c1a04"/></svg>
<div class="r" style="left:210px;top:377px;width:1663px;height:1px;background:#e8e8e8;"></div>
<div class="r" style="left:261px;top:343px;width:1px;height:35px;background:#ececec;"></div>
<div class="r" style="left:312px;top:343px;width:1px;height:35px;background:#ececec;"></div>
<div class="r" style="left:539px;top:343px;width:1px;height:35px;background:#ececec;"></div>
<div class="r" style="left:842px;top:343px;width:1px;height:35px;background:#ececec;"></div>
<div class="r" style="left:1023px;top:343px;width:1px;height:35px;background:#ececec;"></div>
<div class="r" style="left:1204px;top:343px;width:1px;height:35px;background:#ececec;"></div>
<div class="r" style="left:1400px;top:343px;width:1px;height:35px;background:#ececec;"></div>
<div class="r" style="left:1521px;top:343px;width:1px;height:35px;background:#ececec;"></div>
<div class="r" style="left:1642px;top:343px;width:1px;height:35px;background:#ececec;"></div>
<div class="r" style="left:1823px;top:343px;width:1px;height:35px;background:#ececec;"></div>
<svg class="r" style="left:229.8px;top:351px" width="13" height="19" viewBox="0 0 13 19"><path d="M2.6,0.2 H9.7 A1.4,1.4 0 0 1 9.7,3 V3 H10 V9 C11.8,9.6 12.7,11 12.7,13 H0 C0,11 0.9,9.6 2.7,9 V3 H2.6 A1.4,1.4 0 0 1 2.6,0.2 Z" fill="#0d5fd1"/><rect x="4.6" y="3.6" width="1" height="5" fill="#9ec0ee"/><path d="M5.2,13 H7 L6.4,19 H5.8 Z" fill="#0d5fd1"/></svg>
<svg class="r" style="left:277px;top:350px" width="20" height="20" viewBox="0 0 20 20"><rect x="0.75" y="3" width="18.5" height="16.25" fill="none" stroke="#0d5fd1" stroke-width="1.5"/><rect x="0.75" y="2.3" width="18.5" height="4.9" fill="#0d5fd1"/><rect x="3.8" y="0.6" width="3.2" height="4.6" rx="1" fill="#fff" stroke="#0d5fd1" stroke-width="1.3"/><rect x="13" y="0.6" width="3.2" height="4.6" rx="1" fill="#fff" stroke="#0d5fd1" stroke-width="1.3"/><path d="M8.2,10.6 L10.3,9 V17.5" fill="none" stroke="#0d5fd1" stroke-width="1.5"/></svg>
<div class="t" style="left:320px;top:353.00px;font-size:13px;color:#3c3c3c;">Module 05 - A6 Connection to Fou…</div>
<div class="t" style="left:547.5px;top:353.00px;font-size:13px;color:#3c3c3c;letter-spacing:0.06px;">Module 5 - A6 Connection to Foundation</div>
<div class="t" style="left:850px;top:353.00px;font-size:13px;color:#3c3c3c;">1</div>
<div class="t" style="left:1031.6px;top:352.62px;font-size:12.5px;color:#3c3c3c;">Ea</div>
<div class="t" style="left:1408.5px;top:353.00px;font-size:13px;color:#3c3c3c;">0</div>
<div class="t" style="left:1529.5px;top:353.00px;font-size:13px;color:#3c3c3c;">0</div>
<div class="t" style="left:1649.3px;top:353.00px;font-size:13px;color:#3c3c3c;">Metals</div>
<svg class="r" style="left:1838.5px;top:350px" width="20" height="20" viewBox="0 0 20 20"><circle cx="10" cy="10" r="9.4" fill="none" stroke="#8c1a04" stroke-width="1.2"/><rect x="3.8" y="9" width="12" height="2.1" fill="#8c1a04"/></svg>
<div class="r" style="left:1874px;top:203px;width:17px;height:350px;background:#f1f1f1;"></div>
<svg class="r" style="left:1880px;top:210px" width="7" height="5" viewBox="0 0 7 5"><path d="M0,4.2 H7 L3.5,0 Z" fill="#a3a3a3"/></svg>
<svg class="r" style="left:1880px;top:541px" width="7" height="5" viewBox="0 0 7 5"><path d="M0,0 H7 L3.5,4.2 Z" fill="#a3a3a3"/></svg>
<div class="r" style="left:210px;top:553px;width:1681px;height:22px;background:#dcdcdc;"></div>
<div class="r" style="left:208px;top:592px;width:1687px;height:300px;background:#fb3b3b;"></div>
<div class="r" style="left:211px;top:595px;width:1681px;height:300px;background:#fff;"></div>
<div class="r" style="left:211px;top:595px;width:1681px;height:33px;background:#4e5859;"></div>
<div class="t" style="left:220.3px;top:604.16px;font-size:16px;-webkit-text-stroke:0.35px #fff;color:#fff;">Work sequence</div>
<svg class="r" style="left:1036px;top:606px" width="40" height="11" viewBox="0 0 40 11"><path d="M6,1 L1.8,5.3 L6,9.6" fill="none" stroke="#fff" stroke-width="1.5"/><circle cx="16" cy="5.8" r="2.8" fill="#fff"/><path d="M30,1 L34.2,5.3 L30,9.6" fill="none" stroke="#fff" stroke-width="1.5"/></svg>
<svg class="r" style="left:1206px;top:606px" width="12" height="12" viewBox="0 0 12 12"><rect x="0" y="0" width="12" height="12" rx="1.5" fill="#e2e2e2"/></svg>
<div class="t" style="left:1224.6px;top:607.20px;font-size:13px;-webkit-text-stroke:0.35px #fff;color:#fff;letter-spacing:0.09px;">Planning complete</div>
<svg class="r" style="left:1548px;top:604px" width="18" height="18" viewBox="0 0 18 18"><circle cx="9" cy="9" r="7.9" fill="none" stroke="#fff" stroke-width="1.5"/><path d="M9,5 V13 M5,9 H13" stroke="#fff" stroke-width="1.6"/></svg>
<div class="t" style="left:1571px;top:606.00px;font-size:13px;-webkit-text-stroke:0.35px #fff;color:#fff;">Add work step</div>
<svg class="r" style="left:1867px;top:602px" width="7" height="20" viewBox="0 0 7 20"><rect x="0" y="0" width="6.5" height="5.5" rx="1.2" fill="#fff"/><rect x="0" y="7" width="6.5" height="5.5" rx="1.2" fill="#fff"/><rect x="0" y="14" width="6.5" height="5.5" rx="1.2" fill="#fff"/></svg>
<div class="r" style="left:211px;top:628px;width:1681px;height:29px;background:#f2f2f2;"></div>
<div class="r" style="left:1875px;top:628px;width:17px;height:29px;background:#fafafa;"></div>
<div class="r" style="left:261px;top:628px;width:1px;height:29px;background:#e2e2e2;"></div>
<div class="r" style="left:400px;top:628px;width:1px;height:29px;background:#e2e2e2;"></div>
<div class="r" style="left:776px;top:628px;width:1px;height:29px;background:#e2e2e2;"></div>
<div class="r" style="left:1052px;top:628px;width:1px;height:29px;background:#e2e2e2;"></div>
<div class="r" style="left:1328px;top:628px;width:1px;height:29px;background:#e2e2e2;"></div>
<div class="r" style="left:1576px;top:628px;width:1px;height:29px;background:#e2e2e2;"></div>
<div class="r" style="left:1824px;top:628px;width:1px;height:29px;background:#e2e2e2;"></div>
<div class="r" style="left:1874px;top:628px;width:1px;height:29px;background:#e2e2e2;"></div>
<div class="r" style="left:676px;top:628px;width:1px;height:203px;background:#8a8a8a;"></div>
<div class="t" style="left:269px;top:634.62px;font-size:12.5px;-webkit-text-stroke:0.35px #333333;color:#333333;letter-spacing:-0.24px;">Work step number</div>
<div class="t" style="left:408px;top:634.62px;font-size:12.5px;-webkit-text-stroke:0.35px #333333;color:#333333;letter-spacing:-0.1px;">Description</div>
<div class="t" style="left:683.7px;top:634.62px;font-size:12.5px;-webkit-text-stroke:0.35px #333333;color:#333333;">Attachments</div>
<div class="t" style="left:784px;top:634.62px;font-size:12.5px;-webkit-text-stroke:0.35px #333333;color:#333333;">Hold point</div>
<div class="t" style="left:1059.8px;top:634.62px;font-size:12.5px;-webkit-text-stroke:0.35px #333333;color:#333333;">Man hours</div>
<div class="t" style="left:1336px;top:634.62px;font-size:12.5px;-webkit-text-stroke:0.35px #333333;color:#333333;">Schedule start</div>
<div class="t" style="left:1584.4px;top:634.62px;font-size:12.5px;-webkit-text-stroke:0.35px #333333;color:#333333;">Schedule finish</div>
<svg class="r" style="left:372px;top:636px" width="5" height="13" viewBox="0 0 5 13"><path d="M2.5,0 L5,3.2 H3.3 V12.5 H1.7 V3.2 H0 Z" fill="#f5d56e"/></svg>
<div class="r" style="left:211px;top:691px;width:1663px;height:1px;background:#e8e8e8;"></div>
<div class="r" style="left:261px;top:657px;width:1px;height:35px;background:#ececec;"></div>
<div class="r" style="left:400px;top:657px;width:1px;height:35px;background:#ececec;"></div>
<div class="r" style="left:776px;top:657px;width:1px;height:35px;background:#ececec;"></div>
<div class="r" style="left:1052px;top:657px;width:1px;height:35px;background:#ececec;"></div>
<div class="r" style="left:1328px;top:657px;width:1px;height:35px;background:#ececec;"></div>
<div class="r" style="left:1576px;top:657px;width:1px;height:35px;background:#ececec;"></div>
<div class="r" style="left:1824px;top:657px;width:1px;height:35px;background:#ececec;"></div>
<svg class="r" style="left:229.8px;top:665px" width="13" height="19" viewBox="0 0 13 19"><path d="M2.6,0.2 H9.7 A1.4,1.4 0 0 1 9.7,3 V3 H10 V9 C11.8,9.6 12.7,11 12.7,13 H0 C0,11 0.9,9.6 2.7,9 V3 H2.6 A1.4,1.4 0 0 1 2.6,0.2 Z" fill="#0d5fd1"/><rect x="4.6" y="3.6" width="1" height="5" fill="#9ec0ee"/><path d="M5.2,13 H7 L6.4,19 H5.8 Z" fill="#0d5fd1"/></svg>
<svg class="r" style="left:270px;top:668px" width="7" height="14" viewBox="0 0 7 14"><rect x="0" y="0" width="2.2" height="2" fill="#bdbdbd"/><rect x="0" y="3.8" width="2.2" height="2" fill="#bdbdbd"/><rect x="0" y="7.6" width="2.2" height="2" fill="#bdbdbd"/><rect x="0" y="11.3" width="2.2" height="2" fill="#bdbdbd"/><rect x="3.9" y="0" width="2.2" height="2" fill="#bdbdbd"/><rect x="3.9" y="3.8" width="2.2" height="2" fill="#bdbdbd"/><rect x="3.9" y="7.6" width="2.2" height="2" fill="#bdbdbd"/><rect x="3.9" y="11.3" width="2.2" height="2" fill="#bdbdbd"/></svg>
<div class="t" style="left:284px;top:667.00px;font-size:13px;color:#3c3c3c;">1</div>
<div class="t" style="left:408px;top:667.00px;font-size:13px;color:#3c3c3c;letter-spacing:0.05px;">Off load steel</div>
<svg class="r" style="left:716px;top:664px" width="22" height="20" viewBox="0 0 22 20"><path d="M11.6,4.2 H2.6 A1.6,1.6 0 0 0 1,5.8 V17.1 A1.6,1.6 0 0 0 2.6,18.7 H18.2 A1.6,1.6 0 0 0 19.8,17.1 V15.2" fill="none" stroke="#2468d6" stroke-width="1.3"/><path d="M5.6,11.2 H10.4 M8,8.8 V13.6" stroke="#2468d6" stroke-width="1.4"/><path d="M19.4,12.6 V3.6 A2.95,2.95 0 0 0 13.5,3.6 V14.6 A2.1,2.1 0 0 0 17.7,14.6 V6 A1,1 0 0 0 15.7,6 V12.8" fill="none" stroke="#2468d6" stroke-width="1.4"/></svg>
<svg class="r" style="left:1839.4px;top:664px" width="20" height="20" viewBox="0 0 20 20"><circle cx="10" cy="10" r="9.4" fill="none" stroke="#8c1a04" stroke-width="1.2"/><path d="M5.8,6 L14.4,14.2 M14.4,6 L5.8,14.2" stroke="#8c1a04" stroke-width="1.3"/></svg>
<div class="r" style="left:211px;top:726px;width:1663px;height:1px;background:#e8e8e8;"></div>
<div class="r" style="left:261px;top:692px;width:1px;height:35px;background:#ececec;"></div>
<div class="r" style="left:400px;top:692px;width:1px;height:35px;background:#ececec;"></div>
<div class="r" style="left:776px;top:692px;width:1px;height:35px;background:#ececec;"></div>
<div class="r" style="left:1052px;top:692px;width:1px;height:35px;background:#ececec;"></div>
<div class="r" style="left:1328px;top:692px;width:1px;height:35px;background:#ececec;"></div>
<div class="r" style="left:1576px;top:692px;width:1px;height:35px;background:#ececec;"></div>
<div class="r" style="left:1824px;top:692px;width:1px;height:35px;background:#ececec;"></div>
<svg class="r" style="left:229.8px;top:700px" width="13" height="19" viewBox="0 0 13 19"><path d="M2.6,0.2 H9.7 A1.4,1.4 0 0 1 9.7,3 V3 H10 V9 C11.8,9.6 12.7,11 12.7,13 H0 C0,11 0.9,9.6 2.7,9 V3 H2.6 A1.4,1.4 0 0 1 2.6,0.2 Z" fill="#0d5fd1"/><rect x="4.6" y="3.6" width="1" height="5" fill="#9ec0ee"/><path d="M5.2,13 H7 L6.4,19 H5.8 Z" fill="#0d5fd1"/></svg>
<svg class="r" style="left:270px;top:703px" width="7" height="14" viewBox="0 0 7 14"><rect x="0" y="0" width="2.2" height="2" fill="#bdbdbd"/><rect x="0" y="3.8" width="2.2" height="2" fill="#bdbdbd"/><rect x="0" y="7.6" width="2.2" height="2" fill="#bdbdbd"/><rect x="0" y="11.3" width="2.2" height="2" fill="#bdbdbd"/><rect x="3.9" y="0" width="2.2" height="2" fill="#bdbdbd"/><rect x="3.9" y="3.8" width="2.2" height="2" fill="#bdbdbd"/><rect x="3.9" y="7.6" width="2.2" height="2" fill="#bdbdbd"/><rect x="3.9" y="11.3" width="2.2" height="2" fill="#bdbdbd"/></svg>
<div class="t" style="left:284px;top:702.00px;font-size:13px;color:#3c3c3c;">2</div>
<div class="t" style="left:408px;top:702.00px;font-size:13px;color:#3c3c3c;letter-spacing:0.05px;">Install steel</div>
<svg class="r" style="left:716px;top:699px" width="22" height="20" viewBox="0 0 22 20"><path d="M11.6,4.2 H2.6 A1.6,1.6 0 0 0 1,5.8 V17.1 A1.6,1.6 0 0 0 2.6,18.7 H18.2 A1.6,1.6 0 0 0 19.8,17.1 V15.2" fill="none" stroke="#2468d6" stroke-width="1.3"/><path d="M5.6,11.2 H10.4 M8,8.8 V13.6" stroke="#2468d6" stroke-width="1.4"/><path d="M19.4,12.6 V3.6 A2.95,2.95 0 0 0 13.5,3.6 V14.6 A2.1,2.1 0 0 0 17.7,14.6 V6 A1,1 0 0 0 15.7,6 V12.8" fill="none" stroke="#2468d6" stroke-width="1.4"/></svg>
<svg class="r" style="left:1839.4px;top:699px" width="20" height="20" viewBox="0 0 20 20"><circle cx="10" cy="10" r="9.4" fill="none" stroke="#8c1a04" stroke-width="1.2"/><path d="M5.8,6 L14.4,14.2 M14.4,6 L5.8,14.2" stroke="#8c1a04" stroke-width="1.3"/></svg>
<div class="r" style="left:211px;top:761px;width:1663px;height:1px;background:#e8e8e8;"></div>
<div class="r" style="left:261px;top:727px;width:1px;height:35px;background:#ececec;"></div>
<div class="r" style="left:400px;top:727px;width:1px;height:35px;background:#ececec;"></div>
<div class="r" style="left:776px;top:727px;width:1px;height:35px;background:#ececec;"></div>
<div class="r" style="left:1052px;top:727px;width:1px;height:35px;background:#ececec;"></div>
<div class="r" style="left:1328px;top:727px;width:1px;height:35px;background:#ececec;"></div>
<div class="r" style="left:1576px;top:727px;width:1px;height:35px;background:#ececec;"></div>
<div class="r" style="left:1824px;top:727px;width:1px;height:35px;background:#ececec;"></div>
<svg class="r" style="left:229.8px;top:735px" width="13" height="19" viewBox="0 0 13 19"><path d="M2.6,0.2 H9.7 A1.4,1.4 0 0 1 9.7,3 V3 H10 V9 C11.8,9.6 12.7,11 12.7,13 H0 C0,11 0.9,9.6 2.7,9 V3 H2.6 A1.4,1.4 0 0 1 2.6,0.2 Z" fill="#0d5fd1"/><rect x="4.6" y="3.6" width="1" height="5" fill="#9ec0ee"/><path d="M5.2,13 H7 L6.4,19 H5.8 Z" fill="#0d5fd1"/></svg>
<svg class="r" style="left:270px;top:738px" width="7" height="14" viewBox="0 0 7 14"><rect x="0" y="0" width="2.2" height="2" fill="#bdbdbd"/><rect x="0" y="3.8" width="2.2" height="2" fill="#bdbdbd"/><rect x="0" y="7.6" width="2.2" height="2" fill="#bdbdbd"/><rect x="0" y="11.3" width="2.2" height="2" fill="#bdbdbd"/><rect x="3.9" y="0" width="2.2" height="2" fill="#bdbdbd"/><rect x="3.9" y="3.8" width="2.2" height="2" fill="#bdbdbd"/><rect x="3.9" y="7.6" width="2.2" height="2" fill="#bdbdbd"/><rect x="3.9" y="11.3" width="2.2" height="2" fill="#bdbdbd"/></svg>
<div class="t" style="left:284px;top:737.00px;font-size:13px;color:#3c3c3c;">3</div>
<div class="t" style="left:408px;top:737.00px;font-size:13px;color:#3c3c3c;letter-spacing:0.05px;">Bolt and torque</div>
<svg class="r" style="left:716px;top:734px" width="22" height="20" viewBox="0 0 22 20"><path d="M11.6,4.2 H2.6 A1.6,1.6 0 0 0 1,5.8 V17.1 A1.6,1.6 0 0 0 2.6,18.7 H18.2 A1.6,1.6 0 0 0 19.8,17.1 V15.2" fill="none" stroke="#2468d6" stroke-width="1.3"/><path d="M5.6,11.2 H10.4 M8,8.8 V13.6" stroke="#2468d6" stroke-width="1.4"/><path d="M19.4,12.6 V3.6 A2.95,2.95 0 0 0 13.5,3.6 V14.6 A2.1,2.1 0 0 0 17.7,14.6 V6 A1,1 0 0 0 15.7,6 V12.8" fill="none" stroke="#2468d6" stroke-width="1.4"/></svg>
<div class="t" style="left:784.5px;top:737.00px;font-size:13px;color:#3c3c3c;">Yes</div>
<svg class="r" style="left:1839.4px;top:734px" width="20" height="20" viewBox="0 0 20 20"><circle cx="10" cy="10" r="9.4" fill="none" stroke="#8c1a04" stroke-width="1.2"/><path d="M5.8,6 L14.4,14.2 M14.4,6 L5.8,14.2" stroke="#8c1a04" stroke-width="1.3"/></svg>
<div class="r" style="left:211px;top:796px;width:1663px;height:1px;background:#e8e8e8;"></div>
<div class="r" style="left:261px;top:762px;width:1px;height:35px;background:#ececec;"></div>
<div class="r" style="left:400px;top:762px;width:1px;height:35px;background:#ececec;"></div>
<div class="r" style="left:776px;top:762px;width:1px;height:35px;background:#ececec;"></div>
<div class="r" style="left:1052px;top:762px;width:1px;height:35px;background:#ececec;"></div>
<div class="r" style="left:1328px;top:762px;width:1px;height:35px;background:#ececec;"></div>
<div class="r" style="left:1576px;top:762px;width:1px;height:35px;background:#ececec;"></div>
<div class="r" style="left:1824px;top:762px;width:1px;height:35px;background:#ececec;"></div>
<svg class="r" style="left:229.8px;top:770px" width="13" height="19" viewBox="0 0 13 19"><path d="M2.6,0.2 H9.7 A1.4,1.4 0 0 1 9.7,3 V3 H10 V9 C11.8,9.6 12.7,11 12.7,13 H0 C0,11 0.9,9.6 2.7,9 V3 H2.6 A1.4,1.4 0 0 1 2.6,0.2 Z" fill="#0d5fd1"/><rect x="4.6" y="3.6" width="1" height="5" fill="#9ec0ee"/><path d="M5.2,13 H7 L6.4,19 H5.8 Z" fill="#0d5fd1"/></svg>
<svg class="r" style="left:270px;top:773px" width="7" height="14" viewBox="0 0 7 14"><rect x="0" y="0" width="2.2" height="2" fill="#bdbdbd"/><rect x="0" y="3.8" width="2.2" height="2" fill="#bdbdbd"/><rect x="0" y="7.6" width="2.2" height="2" fill="#bdbdbd"/><rect x="0" y="11.3" width="2.2" height="2" fill="#bdbdbd"/><rect x="3.9" y="0" width="2.2" height="2" fill="#bdbdbd"/><rect x="3.9" y="3.8" width="2.2" height="2" fill="#bdbdbd"/><rect x="3.9" y="7.6" width="2.2" height="2" fill="#bdbdbd"/><rect x="3.9" y="11.3" width="2.2" height="2" fill="#bdbdbd"/></svg>
<div class="t" style="left:284px;top:772.00px;font-size:13px;color:#3c3c3c;">4</div>
<div class="t" style="left:408px;top:772.00px;font-size:13px;color:#3c3c3c;letter-spacing:0.05px;">Quality inspection</div>
<svg class="r" style="left:716px;top:769px" width="22" height="20" viewBox="0 0 22 20"><path d="M11.6,4.2 H2.6 A1.6,1.6 0 0 0 1,5.8 V17.1 A1.6,1.6 0 0 0 2.6,18.7 H18.2 A1.6,1.6 0 0 0 19.8,17.1 V15.2" fill="none" stroke="#2468d6" stroke-width="1.3"/><path d="M5.6,11.2 H10.4 M8,8.8 V13.6" stroke="#2468d6" stroke-width="1.4"/><path d="M19.4,12.6 V3.6 A2.95,2.95 0 0 0 13.5,3.6 V14.6 A2.1,2.1 0 0 0 17.7,14.6 V6 A1,1 0 0 0 15.7,6 V12.8" fill="none" stroke="#2468d6" stroke-width="1.4"/></svg>
<svg class="r" style="left:1839.4px;top:769px" width="20" height="20" viewBox="0 0 20 20"><circle cx="10" cy="10" r="9.4" fill="none" stroke="#8c1a04" stroke-width="1.2"/><path d="M5.8,6 L14.4,14.2 M14.4,6 L5.8,14.2" stroke="#8c1a04" stroke-width="1.3"/></svg>
<div class="r" style="left:211px;top:831px;width:1663px;height:1px;background:#e8e8e8;"></div>
<div class="r" style="left:261px;top:797px;width:1px;height:35px;background:#ececec;"></div>
<div class="r" style="left:400px;top:797px;width:1px;height:35px;background:#ececec;"></div>
<div class="r" style="left:776px;top:797px;width:1px;height:35px;background:#ececec;"></div>
<div class="r" style="left:1052px;top:797px;width:1px;height:35px;background:#ececec;"></div>
<div class="r" style="left:1328px;top:797px;width:1px;height:35px;background:#ececec;"></div>
<div class="r" style="left:1576px;top:797px;width:1px;height:35px;background:#ececec;"></div>
<div class="r" style="left:1824px;top:797px;width:1px;height:35px;background:#ececec;"></div>
<svg class="r" style="left:229.8px;top:805px" width="13" height="19" viewBox="0 0 13 19"><path d="M2.6,0.2 H9.7 A1.4,1.4 0 0 1 9.7,3 V3 H10 V9 C11.8,9.6 12.7,11 12.7,13 H0 C0,11 0.9,9.6 2.7,9 V3 H2.6 A1.4,1.4 0 0 1 2.6,0.2 Z" fill="#0d5fd1"/><rect x="4.6" y="3.6" width="1" height="5" fill="#9ec0ee"/><path d="M5.2,13 H7 L6.4,19 H5.8 Z" fill="#0d5fd1"/></svg>
<svg class="r" style="left:270px;top:808px" width="7" height="14" viewBox="0 0 7 14"><rect x="0" y="0" width="2.2" height="2" fill="#bdbdbd"/><rect x="0" y="3.8" width="2.2" height="2" fill="#bdbdbd"/><rect x="0" y="7.6" width="2.2" height="2" fill="#bdbdbd"/><rect x="0" y="11.3" width="2.2" height="2" fill="#bdbdbd"/><rect x="3.9" y="0" width="2.2" height="2" fill="#bdbdbd"/><rect x="3.9" y="3.8" width="2.2" height="2" fill="#bdbdbd"/><rect x="3.9" y="7.6" width="2.2" height="2" fill="#bdbdbd"/><rect x="3.9" y="11.3" width="2.2" height="2" fill="#bdbdbd"/></svg>
<div class="t" style="left:284px;top:807.00px;font-size:13px;color:#3c3c3c;">5</div>
<div class="t" style="left:408px;top:807.00px;font-size:13px;color:#3c3c3c;letter-spacing:0.05px;">Turnover</div>
<svg class="r" style="left:716px;top:804px" width="22" height="20" viewBox="0 0 22 20"><path d="M11.6,4.2 H2.6 A1.6,1.6 0 0 0 1,5.8 V17.1 A1.6,1.6 0 0 0 2.6,18.7 H18.2 A1.6,1.6 0 0 0 19.8,17.1 V15.2" fill="none" stroke="#2468d6" stroke-width="1.3"/><path d="M5.6,11.2 H10.4 M8,8.8 V13.6" stroke="#2468d6" stroke-width="1.4"/><path d="M19.4,12.6 V3.6 A2.95,2.95 0 0 0 13.5,3.6 V14.6 A2.1,2.1 0 0 0 17.7,14.6 V6 A1,1 0 0 0 15.7,6 V12.8" fill="none" stroke="#2468d6" stroke-width="1.4"/></svg>
<svg class="r" style="left:1839.4px;top:804px" width="20" height="20" viewBox="0 0 20 20"><circle cx="10" cy="10" r="9.4" fill="none" stroke="#8c1a04" stroke-width="1.2"/><path d="M5.8,6 L14.4,14.2 M14.4,6 L5.8,14.2" stroke="#8c1a04" stroke-width="1.3"/></svg>
<div class="r" style="left:1875px;top:657px;width:17px;height:174px;background:#f1f1f1;"></div>
<svg class="r" style="left:1880px;top:664px" width="7" height="5" viewBox="0 0 7 5"><path d="M0,4.2 H7 L3.5,0 Z" fill="#a3a3a3"/></svg>
</body></html>
